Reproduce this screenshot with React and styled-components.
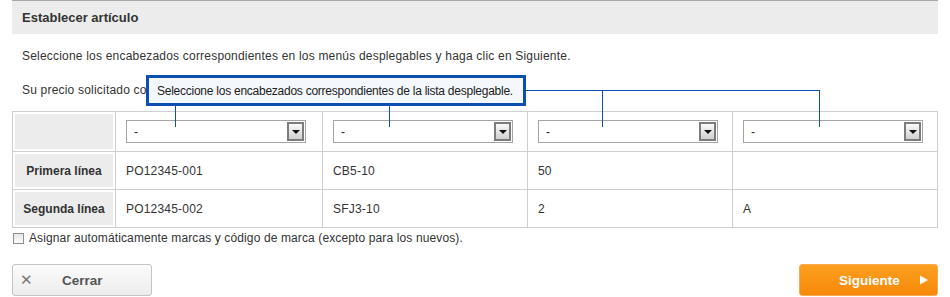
import React from "react"
import styled, { createGlobalStyle } from "styled-components"

const Global = createGlobalStyle`
    html, body { margin:0; padding:0; background:#fff; }
    body { font-family:"Liberation Sans", Arial, sans-serif; color:#333; font-size:12px; }
`;

const Page = styled.div`
    position:relative;
    width:950px;
    height:297px;
    padding:0 12px;
    box-sizing:border-box;
    overflow:hidden;
`;

const Header = styled.div`
    height:34px;
    background:#ececec;
    border-top:1px solid #a8a8a8;
    box-sizing:border-box;
    display:flex;
    align-items:center;
    padding-left:10px;
    width:926px;
`;

const Title = styled.h1`
    margin:0;
    font-size:13px;
    font-weight:bold;
    color:#333;
`;

const Para = styled.p`
    margin:0;
    padding-left:10px;
    height:${(props)=>props.h}px;
    line-height:${(props)=>props.h}px;
    font-size:12px;
    letter-spacing:0.2px;
    color:#333;
    white-space:nowrap;
`;

const Grid = styled.div`
    display:grid;
    grid-template-columns:103px 207px 205px 205px 205px;
    grid-template-rows:40px 38px 38px;
    width:926px;
    border-top:1px solid #cfcfcf;
    border-left:1px solid #cfcfcf;
    box-sizing:border-box;
    margin-top:9px;
`;

const Cell = styled.div`
    border-right:1px solid #cfcfcf;
    border-bottom:1px solid #cfcfcf;
    box-sizing:border-box;
    display:flex;
    align-items:center;
    padding:${(props)=>props.label ? "2px" : "0 10px"};
    font-size:12px;
    letter-spacing:0.2px;
    color:#333;
`;

const Label = styled.div`
    flex:1;
    align-self:stretch;
    background:#ececec;
    display:flex;
    align-items:center;
    justify-content:center;
    font-weight:bold;
    font-size:12px;
    letter-spacing:0;
    color:#333;
`;

const SelectBox = styled.div`
    width:180px;
    height:23px;
    border:1px solid #a5a5a5;
    box-sizing:border-box;
    display:flex;
    align-items:center;
    justify-content:space-between;
    padding:0 1px 0 7px;
    background:#fff;
    font-size:12px;
    color:#222;
`;

const ArrowBtn = styled.div`
    width:17px;
    height:19px;
    box-sizing:border-box;
    border:2px solid #7c7c7c;
    background:linear-gradient(#fafafa, #d0d0d0);
    display:flex;
    align-items:center;
    justify-content:center;
    &::after{
        content:"";
        border-left:4px solid transparent;
        border-right:4px solid transparent;
        border-top:4px solid #111;
    }
`;

const CheckRow = styled.label`
    display:flex;
    align-items:center;
    gap:5px;
    height:20px;
    margin-left:1px;
    font-size:12px;
    letter-spacing:0.12px;
    color:#333;
`;

const Box = styled.span`
    width:11px;
    height:11px;
    box-sizing:border-box;
    border:1px solid #8f8f8f;
    background:linear-gradient(#e6e6e6, #fbfbfb);
`;

const Footer = styled.div`
    display:flex;
    justify-content:space-between;
    margin-top:16px;
    width:926px;
`;

const Btn = styled.button`
    height:32px;
    width:${(props)=>props.w}px;
    box-sizing:border-box;
    border-radius:3px;
    font-family:"Liberation Sans", Arial, sans-serif;
    font-size:13.5px;
    font-weight:bold;
    display:flex;
    align-items:center;
    padding:0;
    cursor:pointer;
    border:1px solid ${(props)=>props.primary ? "#f9ab4f" : "#c4c4c4"};
    background:${(props)=>props.primary ? "linear-gradient(#fc9f1f, #f7890a)" : "linear-gradient(#fbfbfb, #ececec)"};
    color:${(props)=>props.primary ? "#fff" : "#555"};
`;

const BtnIcon = styled.span`
    font-weight:normal;
    font-size:15px;
    color:#777;
    width:49px;
    padding-left:7px;
    box-sizing:border-box;
    text-align:left;
`;

const BtnText = styled.span`
    flex:1;
    text-align:center;
    padding-left:${(props)=>props.pad}px;
`;

const Tip = styled.div`
    position:absolute;
    left:146px;
    top:75px;
    width:380px;
    height:31px;
    box-sizing:border-box;
    border:3px solid #0b4fb1;
    background:#f4f8fc;
    display:flex;
    align-items:center;
    padding-left:8px;
    font-size:12px;
    letter-spacing:-0.25px;
    color:#222;
    white-space:nowrap;
`;

const Lines = styled.svg`
    position:absolute;
    left:0;
    top:0;
    pointer-events:none;
`;

const rows = [
    ["Primera línea", "PO12345-001", "CB5-10", "50", ""],
    ["Segunda línea", "PO12345-002", "SFJ3-10", "2", "A"],
];

const App = ()=>{
    return(
        <Page>
            <Global/>
            <Header>
                <Title>Establecer artículo</Title>
            </Header>
            <Para h={44}>Seleccione los encabezados correspondientes en los menús desplegables y haga clic en Siguiente.</Para>
            <Para h={24}>Su precio solicitado contiene las siguientes columnas.</Para>
            <Grid>
                <Cell label><Label/></Cell>
                {[0,1,2,3].map((i)=>(
                    <Cell key={i}>
                        <SelectBox>-<ArrowBtn/></SelectBox>
                    </Cell>
                ))}
                {rows.map((r)=>(
                    <React.Fragment key={r[0]}>
                        <Cell label><Label>{r[0]}</Label></Cell>
                        {r.slice(1).map((v, j)=>(
                            <Cell key={j}>{v}</Cell>
                        ))}
                    </React.Fragment>
                ))}
            </Grid>
            <CheckRow>
                <Box/>
                Asignar automáticamente marcas y código de marca (excepto para los nuevos).
            </CheckRow>
            <Footer>
                <Btn w={140}><BtnIcon>✕</BtnIcon>Cerrar</Btn>
                <Btn w={139} primary>
                    <BtnText pad={28}>Siguiente</BtnText>
                    <svg width="26" height="12" viewBox="0 0 26 12"><polygon points="9,1.5 9,10.5 17,6" fill="#fff"/></svg>
                </Btn>
            </Footer>
            <Lines width="950" height="297">
                <g stroke="#0b4fb1" strokeWidth="1" fill="none" shapeRendering="crispEdges">
                    <line x1="175.5" y1="105" x2="175.5" y2="127"/>
                    <line x1="389.5" y1="105" x2="389.5" y2="127"/>
                    <line x1="526" y1="90.5" x2="820" y2="90.5"/>
                    <line x1="602.5" y1="90" x2="602.5" y2="127"/>
                    <line x1="819.5" y1="90" x2="819.5" y2="127"/>
                </g>
            </Lines>
            <Tip>Seleccione los encabezados correspondientes de la lista desplegable.</Tip>
        </Page>
    )
}

export default App
